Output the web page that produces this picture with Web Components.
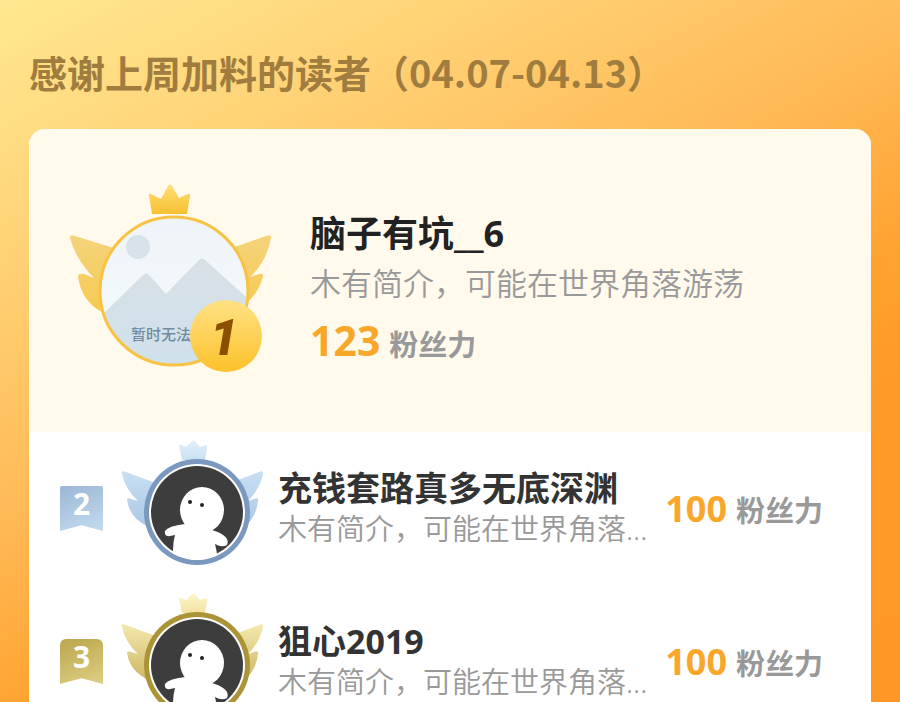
<!DOCTYPE html>
<html lang="zh-CN">
<head>
<meta charset="utf-8">
<meta name="viewport" content="width=device-width, initial-scale=1">
<title>感谢上周加料的读者</title>
<style>
  html {
    min-height: 100%;
    background: linear-gradient(152deg, #ffe88f 0%, #ffd67b 18%, #ffbb58 43%, #ffa22f 62%, #ff9a27 72%, #ff9726 100%) fixed;
    scrollbar-width: none;
  }

  body {
    margin: 0;
    font-family: "Noto Sans", "Noto Sans CJK SC", sans-serif;
  }
</style>
</head>
<body>
<fan-board>
  <span slot="title">感谢上周加料的读者（04.07-04.13）</span>
  <fan-top points="123">
    <fan-avatar slot="avatar" tone="gold"></fan-avatar>
    <span slot="name">脑子有坑__6</span>
    <span slot="bio">木有简介，可能在世界角落游荡</span>
  </fan-top>
  <fan-row rank="2" points="100">
    <fan-avatar slot="avatar" tone="silver"></fan-avatar>
    <span slot="name">充钱套路真多无底深渊</span>
    <span slot="bio">木有简介，可能在世界角落...</span>
  </fan-row>
  <fan-row rank="3" points="100">
    <fan-avatar slot="avatar" tone="bronze"></fan-avatar>
    <span slot="name">狙心2019</span>
    <span slot="bio">木有简介，可能在世界角落...</span>
  </fan-row>
</fan-board>

<script>
class FanBoard extends HTMLElement {
  constructor() {
    super();
    this.attachShadow({ mode: 'open' });
  }

  connectedCallback() {
    this.shadowRoot.innerHTML = `
    <style>
      :host {
        display: block;
        padding: 46px 29px 0;
      }
      h1 {
        margin: 0 0 31px;
        color: #a07d3f;
        font: 700 38px/52px "Noto Sans CJK SC", sans-serif;
        white-space: nowrap;
      }
      main {
        background: #fff;
        border-radius: 16px 16px 0 0;
        overflow: hidden;
      }
    </style>
    <h1><slot name="title"></slot></h1>
    <main><slot></slot></main>
    `;
  }
}

class FanPoints extends HTMLElement {
  constructor() {
    super();
    this.attachShadow({ mode: 'open' });
  }

  connectedCallback() {
    this.shadowRoot.innerHTML = `
    <style>
      :host {
        display: flex;
        align-items: baseline;
        gap: 9px;
        white-space: nowrap;
        line-height: 48px;
      }
      b {
        color: #f8a72a;
        font-size: var(--points-size, 36px);
      }
      span {
        color: #999;
        font-size: 29px;
        font-weight: 700;
      }
    </style>
    <b>${this.getAttribute('value')}</b>
    <span>粉丝力</span>
    `;
  }
}

class FanTop extends HTMLElement {
  constructor() {
    super();
    this.attachShadow({ mode: 'open' });
  }

  connectedCallback() {
    this.shadowRoot.innerHTML = `
    <style>
      :host {
        display: flex;
        gap: 36px;
        padding: 51px 40px 56px;
        background: #fffaec;
      }
      .info {
        flex: 1;
        min-width: 0;
        padding-top: 29px;
      }
      h2 {
        margin: 0;
        color: #222;
        font-size: 36px;
        line-height: 50px;
      }
      p {
        margin: 0 0 9px;
        color: #999;
        font-size: 31px;
        font-weight: 350;
        line-height: 48px;
      }
      fan-points {
        --points-size: 41px;
      }
    </style>
    <slot name="avatar"></slot>
    <div class="info">
      <h2><slot name="name"></slot></h2>
      <p><slot name="bio"></slot></p>
      <fan-points value="${this.getAttribute('points')}"></fan-points>
    </div>
    `;
  }
}

class FanRow extends HTMLElement {
  constructor() {
    super();
    this.attachShadow({ mode: 'open' });
  }

  connectedCallback() {
    const rank = this.getAttribute('rank');
    const fill = rank === '2' ? ['#9bb7d6', '#c5dcef'] : ['#bba64c', '#ddcf84'];
    this.shadowRoot.innerHTML = `
    <style>
      :host {
        display: flex;
        align-items: flex-start;
        height: 147px;
        padding: 6px 48px 0 31px;
      }
      .rank {
        flex: none;
        width: 43px;
        height: 45px;
        margin: 48px 17px 0 0;
        color: #fff;
        font: 700 30px/36px "Noto Sans", sans-serif;
        text-align: center;
        background: linear-gradient(160deg, ${fill[0]}, ${fill[1]});
        border-radius: ${rank === '2' ? 2 : 6}px ${rank === '2' ? 2 : 6}px 0 0;
        clip-path: polygon(0 0, 100% 0, 100% 100%, 50% 87%, 0 100%);
      }
      .info {
        flex: 1;
        min-width: 0;
        padding: 29px 0 0 14px;
        white-space: nowrap;
      }
      h2 {
        margin: 0;
        color: #333;
        font-size: 34px;
        line-height: 42px;
      }
      p {
        margin: 0;
        color: #999;
        font-size: 29px;
        font-weight: 350;
        line-height: 40px;
      }
      fan-points {
        margin-top: 47px;
      }
    </style>
    <div class="rank">${rank}</div>
    <slot name="avatar"></slot>
    <div class="info">
      <h2><slot name="name"></slot></h2>
      <p><slot name="bio"></slot></p>
    </div>
    <fan-points value="${this.getAttribute('points')}"></fan-points>
    `;
  }
}

const TONES = {
  silver: { crown: ['#e3f0fa', '#c9e0f4'], wing: ['#c9dff3', '#a9c8e4'], ring: '#7b98bf' },
  bronze: { crown: ['#fcf5cf', '#f3e3a0'], wing: ['#f3e8ae', '#cdb763'], ring: '#ab9437' }
};

class FanAvatar extends HTMLElement {
  constructor() {
    super();
    this.attachShadow({ mode: 'open' });
  }

  connectedCallback() {
    const gold = this.getAttribute('tone') === 'gold';
    this.shadowRoot.innerHTML = `
    <style>
      :host {
        display: block;
        flex: none;
      }
      svg {
        display: block;
      }
      .caption {
        font: 500 15px "Noto Sans CJK SC", sans-serif;
      }
      .medal {
        font: italic 900 50px Roboto, sans-serif;
      }
    </style>
    ${gold ? this.placeholder() : this.person(TONES[this.getAttribute('tone')])}
    `;
  }

  placeholder() {
    return `
    <svg width="205" height="196" viewBox="0 0 205 196" role="img" aria-label="头像">
      <defs>
        <linearGradient id="crown" x2="0" y2="1"><stop stop-color="#ffdf76"/><stop offset="1" stop-color="#f8c032"/></linearGradient>
        <linearGradient id="wing" x2="0" y2="1"><stop stop-color="#f4d37c"/><stop offset="1" stop-color="#f6ca51"/></linearGradient>
        <linearGradient id="sky" x2="0" y2="1"><stop stop-color="#eef4f9"/><stop offset="1" stop-color="#f6fafc"/></linearGradient>
        <linearGradient id="hill" x2="0" y2="1"><stop stop-color="#d8e0e5"/><stop offset="1" stop-color="#cfe1ed"/></linearGradient>
        <linearGradient id="medal" x2="0" y2="1"><stop stop-color="#ffe285"/><stop offset="1" stop-color="#fdc12a"/></linearGradient>
        <clipPath id="face"><circle cx="105" cy="111" r="73"/></clipPath>
      </defs>
      <path fill="url(#wing)" d="M1 58Q0 54 6 56L48 69L40 124Q39 135 33 132Q13 122 9 97Q9 93 15 94L25 98Q7 80 1 58Z"/>
      <path fill="url(#wing)" d="M202 58Q203 54 197 56L160 69L169 128Q187 120 194 97Q195 93 190 94L181 97Q198 81 202 58Z"/>
      <path fill="url(#crown)" d="M80 16Q79 13 82 14L92 19L99 6Q101 3 103 6L110 18L119 14Q122 13 121 16L118 34H83Z"/>
      <circle cx="105" cy="111" r="74" fill="url(#sky)"/>
      <g clip-path="url(#face)">
        <circle cx="69" cy="67" r="12" fill="#d8e2e9"/>
        <path fill="url(#hill)" d="M30 138L74 95Q77 92 80 95L97 114L130 80Q133 77 136 80L184 123V190H30Z"/>
        <text class="caption" x="62" y="160" fill="#718b9e">暂时无法</text>
      </g>
      <circle cx="105" cy="111" r="74" fill="none" stroke="#f8c344" stroke-width="3"/>
      <circle cx="157" cy="156" r="36" fill="url(#medal)"/>
      <text class="medal" x="155" y="175" text-anchor="middle" fill="#8b4f00">1</text>
    </svg>`;
  }

  person(tone) {
    return `
    <svg width="144" height="128" viewBox="0 0 144 128" role="img" aria-label="头像">
      <defs>
        <linearGradient id="crown" x2="0" y2="1"><stop stop-color="${tone.crown[0]}"/><stop offset="1" stop-color="${tone.crown[1]}"/></linearGradient>
        <linearGradient id="wing" x2="0" y2="1"><stop stop-color="${tone.wing[0]}"/><stop offset="1" stop-color="${tone.wing[1]}"/></linearGradient>
        <clipPath id="face"><circle cx="77" cy="74" r="48"/></clipPath>
      </defs>
      <path fill="url(#wing)" d="M2 36Q0 32 6 34L33 44L29 89Q10 81 7 62Q7 59 11 61L18 63Q5 51 2 36Z"/>
      <path fill="url(#wing)" d="M143 36Q144 32 139 34L115 43L124 89Q136 80 138 63Q139 59 134 61L128 63Q140 51 143 36Z"/>
      <path fill="url(#crown)" d="M59 8Q59 6 61 7L66 9L72 3Q73 2 75 3L80 9L85 7Q88 7 87 10L85 22H62Z"/>
      <circle cx="77" cy="74" r="53" fill="${tone.ring}"/>
      <circle cx="77" cy="74" r="48" fill="#fff"/>
      <circle cx="77" cy="74" r="46" fill="#3d3d3d"/>
      <g clip-path="url(#face)" fill="#fff">
        <ellipse cx="82" cy="72" rx="22" ry="23"/>
        <path d="M65 86Q48 88 45 93Q44 99 50 98L55 97Q53 104 53 112V123H98Q97 114 95 106Q102 110 107 107Q111 98 92 92L88 85Z"/>
      </g>
      <circle cx="70" cy="64" r="2" fill="#222"/>
      <circle cx="82" cy="67" r="2" fill="#222"/>
    </svg>`;
  }
}

customElements.define('fan-avatar', FanAvatar);
customElements.define('fan-points', FanPoints);
customElements.define('fan-top', FanTop);
customElements.define('fan-row', FanRow);
customElements.define('fan-board', FanBoard);
</script>
</body>
</html>
